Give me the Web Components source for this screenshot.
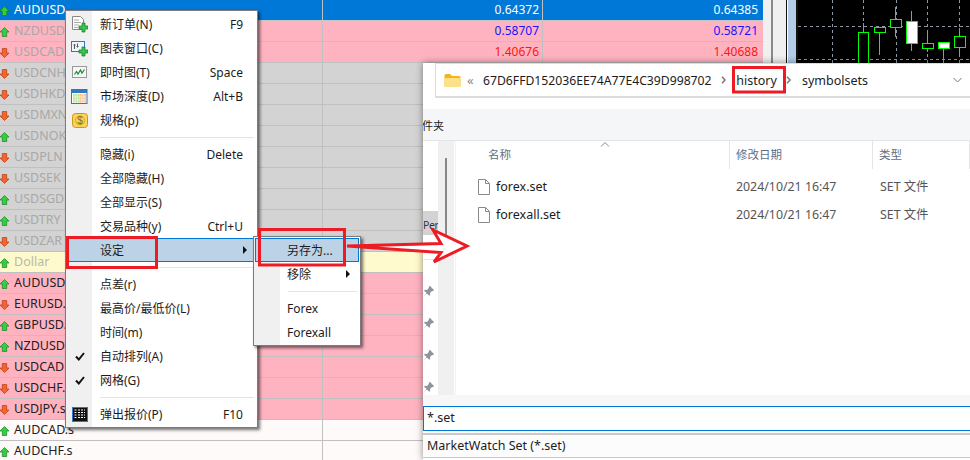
<!DOCTYPE html>
<html lang="zh">
<head>
<meta charset="utf-8">
<style>
html,body{margin:0;padding:0;width:970px;height:460px;overflow:hidden;background:#fff;font-family:"Noto Sans","Noto Sans CJK SC",sans-serif}
</style>
</head>
<body>
<desk-top>
  <market-watch slot="base"></market-watch>
  <side-strip slot="base"></side-strip>
  <candle-chart slot="base"></candle-chart>

  <file-dialog slot="over"></file-dialog>

  <pop-menu slot="over" style="left:65px;top:10px;width:193px;--icon:26px">
    <menu-item shortcut="F9"><svg slot="icon" width="17" height="17" viewBox="0 0 17 17"><path d="M1.500 .5h8l3 3v10h-11z" fill="#fff" stroke="#888"/><path d="M3 4h5M3 6.500h7M3 9h5M3 11.500h4" stroke="#aaa"/><path d="M11 7h3v3h3v3h-3v3h-3v-3H8v-3h3z" fill="#3cc153" stroke="#167a26" stroke-width=".7"/></svg>新订单(N)</menu-item>
    <menu-item><svg slot="icon" width="17" height="17" viewBox="0 0 17 17"><rect x=".5" y="1.500" width="13" height="10" fill="#eef5fc" stroke="#2f78c4"/><path d="M3.500 4v5M2.500 5h2M6.500 3.500v4M5.500 6.500h2" stroke="#555"/><path d="M11 7h3v3h3v3h-3v3h-3v-3H8v-3h3z" fill="#3cc153" stroke="#167a26" stroke-width=".7"/></svg>图表窗口(C)</menu-item>
    <menu-item shortcut="Space"><svg slot="icon" width="16" height="13" viewBox="0 0 16 13"><rect x=".5" y=".5" width="14" height="11" fill="#f6f6f6" stroke="#999"/><path d="M2.500 8.500l2-3 1.500 2.500 2.500-4 1.500 3 2.500-3.500" fill="none" stroke="#1c8a2e" stroke-width="1.200"/></svg>即时图(T)</menu-item>
    <menu-item shortcut="Alt+B"><svg slot="icon" width="17" height="15" viewBox="0 0 17 15"><rect x=".5" y=".5" width="15.500" height="14" fill="#fff" stroke="#2f78c4"/><rect x="1" y="1" width="15" height="3" fill="#2f78c4"/><path d="M2 5h6.500v8.500H2z" fill="#bfe39a"/><path d="M8.500 5H15v8.500H8.500z" fill="#f9c48c"/><path d="M4.200 5v8.500M6.400 5v8.500M10.700 5v8.500M12.900 5v8.500M2 8h13M2 11h13" stroke="#fff" stroke-width=".5"/></svg>市场深度(D)</menu-item>
    <menu-item><svg slot="icon" width="16" height="15" viewBox="0 0 16 15"><rect x=".5" y=".5" width="15" height="14" rx="3" fill="#fbd35a" stroke="#c79a1e"/><circle cx="8" cy="7.500" r="4.500" fill="none" stroke="#d9a520"/><text x="8" y="11" text-anchor="middle" font-family="Liberation Sans" font-size="10" fill="#8a6a10">$</text></svg>规格(p)</menu-item>
    <menu-sep></menu-sep>
    <menu-item shortcut="Delete">隐藏(i)</menu-item>
    <menu-item>全部隐藏(H)</menu-item>
    <menu-item>全部显示(S)</menu-item>
    <menu-item shortcut="Ctrl+U">交易品种(y)</menu-item>
    <menu-item arrow active>设定</menu-item>
    <menu-sep></menu-sep>
    <menu-item>点差(r)</menu-item>
    <menu-item>最高价/最低价(L)</menu-item>
    <menu-item>时间(m)</menu-item>
    <menu-item check>自动排列(A)</menu-item>
    <menu-item check>网格(G)</menu-item>
    <menu-sep></menu-sep>
    <menu-item shortcut="F10"><svg slot="icon" width="16" height="15" viewBox="0 0 16 15"><rect x=".5" y=".5" width="15" height="14" fill="#111" stroke="#2f78c4"/><path d="M2.500 3h2M2.500 5.500h2M2.500 8h2M2.500 10.500h2M6 3h7M6 5.500h7M6 8h7M6 10.500h7" stroke="#fff" stroke-dasharray="2 1"/></svg>弹出报价(P)</menu-item>
  </pop-menu>

  <pop-menu slot="over" style="left:253px;top:236px;width:108px;--icon:26px;--lab:7px">
    <menu-item active>另存为...</menu-item>
    <menu-item arrow>移除</menu-item>
    <menu-sep></menu-sep>
    <menu-item>Forex</menu-item>
    <menu-item>Forexall</menu-item>
  </pop-menu>

  <mark-up slot="over"></mark-up>
</desk-top>

<script>
class Base extends HTMLElement{
    connectedCallback(){
        if(this.shadowRoot) return
        this.attachShadow({mode:'open'}).innerHTML = this.html
    }
}

const ROWS = [
    ['AUDUSD',1,'sel','0.64372','0.64385'],
    ['NZDUSD',1,'pinkoff','0.58707','0.58721','#1414ff'],
    ['USDCAD',0,'pinkoff','1.40676','1.40688','#ff1414'],
    ['USDCNH',0,'off'],['USDHKD',0,'off'],['USDMXN',0,'off'],['USDNOK',1,'off'],
    ['USDPLN',0,'off'],['USDSEK',0,'off'],['USDSGD',1,'off'],['USDTRY',1,'off'],['USDZAR',0,'off'],
    ['Dollar',1,'yellow'],
    ['AUDUSD.',1,'pink'],['EURUSD.',0,'pink'],['GBPUSD.',1,'pink'],['NZDUSD',1,'pink'],
    ['USDCAD',0,'pink'],['USDCHF.',0,'pink'],['USDJPY.s',0,'pink'],
    ['AUDCAD.s',1,'snow'],['AUDCHF.s',1,'snow'],
]

class DeskTop extends Base{
    get html(){
        return `
        <style>
        :host{display:block;position:relative;width:970px;height:460px;overflow:hidden}
        #base{display:flex;height:100%}
        </style>
        <div id="base"><slot name="base"></slot></div>
        <slot name="over"></slot>
        `
    }
}

class MarketWatch extends Base{
    get html(){
        const rows = ROWS.map(r => `<quote-row symbol="${r[0]}" dir="${r[1] ? 'up' : 'down'}" kind="${r[2]}" bid="${r[3] || ''}" ask="${r[4] || ''}" price="${r[5] || ''}"></quote-row>`).join('')
        return `
        <style>:host{display:block;width:763px;flex:none}</style>
        ${rows}
        `
    }
}

class QuoteRow extends Base{
    get html(){
        const up = this.getAttribute('dir') === 'up'
        const arrow = up
            ? '<path d="M4.500.5L9 5H6.700V9.500H2.300V5H0z" fill="#2fd23c" stroke="#1d7f27" stroke-width=".7"/>'
            : '<path d="M2.300.5h4.400V5H9L4.500 9.500 0 5H2.300z" fill="#f9622a" stroke="#b23c12" stroke-width=".7"/>'
        return `
        <style>
        :host{display:grid;grid-template-columns:323px 220px 220px;height:21px;box-sizing:border-box;border-bottom:1px solid #c0c0c0;
            font:12.500px/20px "Noto Sans",sans-serif;color:#222;white-space:nowrap}
        :host([kind=sel]){background:#0078d7;color:#fff;border-bottom-color:#c6c6c6}
        :host([kind=pinkoff]){background:#ffb3c0;color:#a8a8a8}
        :host([kind=pink]){background:#ffb3c0}
        :host([kind=off]){background:#d3d3d3;color:#a8a8a8}
        :host([kind=yellow]){background:#fffacd;color:#b9b9a6}
        :host([kind=snow]){background:#fffafa}
        div{box-sizing:border-box;border-right:1px solid #c0c0c0}
        .sym{display:flex;align-items:center;gap:5px}
        .sym svg{flex:none;margin-top:2px}
        .num{text-align:right;padding-right:3px;font-size:12px;color:${this.getAttribute('price') || 'inherit'}}
        :host([kind=sel]) .num{color:#fff}
        </style>
        <div class="sym"><svg width="9" height="10" viewBox="0 0 9 10">${arrow}</svg><span>${this.getAttribute('symbol')}</span></div>
        <div class="num">${this.getAttribute('bid')}</div>
        <div class="num" style="border-right:0;padding-right:5px">${this.getAttribute('ask')}</div>
        `
    }
}

class SideStrip extends Base{
    get html(){
        return `
        <style>
        :host{display:flex;width:35px;flex:none;height:63px;background:#f0f0f0}
        i{display:block;flex:none}
        </style>
        <i style="width:8px"></i>
        <i style="width:2px;background:#8a8a8a"></i>
        <i style="width:13px"></i>
        <i style="width:1px;background:#111"></i>
        <i style="width:1px;background:#fff"></i>
        <i style="width:8px;background:#b4cce8"></i>
        <i style="width:2px;background:#111"></i>
        `
    }
}

class CandleChart extends Base{
    get html(){
        const candles = [
            [858,868,32,63,23,63,0],
            [874,885,27,32,27,55,0],
            [890,901,19,27,7,37,0],
            [906,917,21,43,11,51,1],
            [922,933,43,48,30,52,0],
            [938,949,42,48,42,63,1],
            [954,965,36,47,28,57,0],
        ]
        const lines = [832,863,896,927,959].map(x => `<path d="M${x+.5} 0V63"/>`).join('')
            + [26,59].map(y => `<path d="M798 ${y+.5}H970"/>`).join('')
        const body = candles.map(c => {
            const x = c[0] - 798, w = c[1] - c[0]
            const mid = x + Math.floor(w / 2) + .5
            return `<path d="M${mid} ${c[4]}V${c[5]}" stroke="#0f0"/>
            <rect x="${x+.5}" y="${c[2]+.5}" width="${w}" height="${c[3]-c[2]}" fill="${c[6] ? '#fff' : '#000'}" stroke="#0f0"/>`
        }).join('')
        return `
        <style>:host{display:block;flex:1;height:63px;background:#000}svg{display:block}</style>
        <svg width="172" height="63" viewBox="0 0 172 63">
            <g transform="translate(-798 0)" stroke="#8d97a5" stroke-dasharray="3 3">${lines}</g>
            ${body}
        </svg>
        `
    }
}

class PopMenu extends Base{
    get html(){
        return `
        <style>
        :host{position:absolute;display:block;box-sizing:border-box;border:1px solid #7b7b7b;padding:1px 0;
            background:linear-gradient(90deg,#f0f0f0 var(--icon),#fff var(--icon));
            box-shadow:2px 2px 3px rgba(0,0,0,.55)}
        </style>
        <slot></slot>
        `
    }
}

class MenuItem extends Base{
    get html(){
        const short = this.getAttribute('shortcut')
        return `
        <style>
        :host{display:flex;align-items:center;height:24px;box-sizing:border-box;margin:0 1px;
            font:12px/22px "Noto Sans","Noto Sans CJK SC",sans-serif;color:#1c1c1c;white-space:nowrap}
        :host([active]){background:#bcd2e6;border:1px solid #0078d7}
        .ico{flex:none;width:25px;display:flex;justify-content:center;align-items:center;margin-right:var(--lab,8px)}
        :host([active]) .ico{width:24px}
        .lab{flex:1;padding-top:2px}
        .sc{padding:2px 13px 0 0}
        .ar{width:0;height:0;border:4px solid transparent;border-left:4px solid #111;border-right:0;margin-right:9px}
        :host([active]) .ar{margin-right:8px}
        </style>
        <span class="ico"><slot name="icon">${this.hasAttribute('check') ? '<svg width="10" height="9" viewBox="0 0 10 9"><path d="M1 4.500l2.800 3L9 1" fill="none" stroke="#111" stroke-width="2"/></svg>' : ''}</slot></span>
        <span class="lab"><slot></slot></span>
        ${short ? `<span class="sc">${short}</span>` : ''}
        ${this.hasAttribute('arrow') ? '<span class="ar"></span>' : ''}
        `
    }
}

class MenuSep extends Base{
    get html(){
        return `
        <style>
        :host{display:block;height:10px;box-sizing:border-box;padding:5px 3px 4px 34px}
        div{height:1px;background:#e4e4e4}
        </style>
        <div></div>
        `
    }
}

class FileDialog extends Base{
    get html(){
        const pin = '<svg width="12" height="12" viewBox="0 0 12 12"><path d="M6.800 .8l4.400 4.400-1.300.9-.9-.2-2 2 .2 2-.9.900L3.900 8.400.8 11.200 3.600 8.100 1 5.700l.9-.9 2 .2 2-2-.2-.9z" fill="#8e959c"/></svg>'
        const chev = '<svg width="5" height="8" viewBox="0 0 5 8"><path d="M1 .8L4 4 1 7.200" fill="none" stroke="#777" stroke-width="1.500"/></svg>'
        return `
        <style>
        :host{position:absolute;left:423px;top:63px;width:547px;height:397px;display:flex;flex-direction:column;background:#fff;
            box-shadow:0 0 7px rgba(0,0,0,.45);font:12.500px "Noto Sans","Noto Sans CJK SC",sans-serif;color:#1c1c1c;white-space:nowrap}
        #addr{margin-left:12px;height:35px;flex:none;box-sizing:border-box;border:1px solid #dcdcdc;border-width:1px 0 2px 1px;display:flex;align-items:center}
        #addr .folder{margin:0 6px 0 8px}
        #addr .back{color:#888;width:16px;font-size:13px}
        #addr .chev{display:flex;justify-content:center;flex:none}
        #addr .crumb{width:231px;font-size:12.200px}
        #gap{height:11px;flex:none}
        #tool{height:32px;flex:none;box-sizing:border-box;background:#f5f6f7;border-bottom:1px solid #e5e5e5;line-height:33px;overflow:hidden}
        #tool span{font-size:11px;display:block;margin-left:-1px}
        #body{display:flex;flex:1;min-height:0}
        #nav{width:15px;flex:none}
        #per{margin-top:70px;height:24px;background:#d3d3d3;font-size:10.500px;letter-spacing:-.4px;line-height:29px;color:#333}
        #rule{margin-top:24px;height:1px;background:#e6e6e6}
        #pins{margin-top:25px;display:flex;flex-direction:column;gap:20px}
        #pins svg{display:block}
        #bar{width:16px;flex:none;background:#f0f0f0;padding:17px 0 0 7px;box-sizing:border-box}
        #bar i{display:block;width:2px;height:93px;background:#888}
        #edge{width:3px;flex:none;background:linear-gradient(90deg,#fff 1px,#f2f2f2 1px,#f2f2f2 2px,#fff 2px)}
        #list{flex:1;min-width:0}
        #head{display:grid;grid-template-columns:273px 143px 1fr;height:28px;color:#5d6f85;font-size:11.500px;line-height:28px;position:relative}
        #head span{border-right:1px solid #e5e5e5;padding-left:6px}
        #head span:first-child{padding-left:31px}
        #head span:last-child{border:0;padding-left:7px}
        #head svg{position:absolute;left:143px;top:1px}
        #files{padding-top:4px}
        #strip{height:11px;flex:none;background:#f7f7f7}
        #name{height:25px;flex:none;box-sizing:border-box;border:1.500px solid #0078d7;border-right:0;line-height:22px;padding-left:3px}
        #type{margin-top:2px;height:25px;flex:none;box-sizing:border-box;border:solid #c8c8c8;border-width:2px 0 1px;background:#fcfcfc;line-height:22px;padding-left:4px}
        #foot{height:2px;flex:none}
        </style>
        <div id="addr">
            <svg class="folder" width="17" height="15" viewBox="0 0 17 15"><path d="M.5 2.500q0-1.500 1.500-1.500h4l2 2h7q1.500 0 1.500 1.500v8q0 1.500-1.500 1.500H2q-1.500 0-1.500-1.500z" fill="#f3b416"/><path d="M.5 5h16v7.500q0 1.500-1.500 1.500H2q-1.500 0-1.500-1.500z" fill="#fde08a"/></svg>
            <span class="back">«</span>
            <span class="crumb">67D6FFD152036EE74A77E4C39D998702</span>
            <span class="chev" style="width:19px">${chev}</span>
            <span style="width:47px;text-align:center">history</span>
            <span class="chev" style="width:16px;margin-right:6px">${chev}</span>
            <span>symbolsets</span>
            <svg style="margin-left:auto;margin-right:8px" width="9" height="6" viewBox="0 0 9 6"><path d="M.5 1l4 4 4-4" fill="none" stroke="#777"/></svg>
        </div>
        <div id="gap"></div>
        <div id="tool"><span>件夹</span></div>
        <div id="body">
            <div id="nav">
                <div id="per">Per</div>
                <div id="rule"></div>
                <div id="pins">${pin}${pin}${pin}${pin}</div>
            </div>
            <div id="bar"><i></i></div>
            <div id="edge"></div>
            <div id="list">
                <div id="head">
                    <span>名称</span><span>修改日期</span><span>类型</span>
                    <svg width="10" height="5" viewBox="0 0 10 5"><path d="M1 4.500l4-4 4 4" fill="none" stroke="#888"/></svg>
                </div>
                <div id="files">
                    <file-row name="forex.set"></file-row>
                    <file-row name="forexall.set"></file-row>
                </div>
            </div>
        </div>
        <div id="strip"></div>
        <div id="name">*.set</div>
        <div id="type">MarketWatch Set (*.set)</div>
        <div id="foot"></div>
        `
    }
}

class FileRow extends Base{
    get html(){
        return `
        <style>
        :host{display:grid;grid-template-columns:273px 143px 1fr;height:28px;line-height:28px;font-size:12.500px;color:#1c1c1c}
        div{display:flex;align-items:center;padding-left:21px;gap:6px}
        span{padding-left:6px;color:#555;font-size:12.350px}
        span:last-child{padding-left:7px}
        </style>
        <div><svg width="12" height="16" viewBox="0 0 12 16"><path d="M.5.5h7l4 4v11H.5z" fill="#fff" stroke="#8a8a8a"/><path d="M7.500.5v4h4" fill="none" stroke="#8a8a8a"/></svg>${this.getAttribute('name')}</div>
        <span>2024/10/21 16:47</span>
        <span>SET 文件</span>
        `
    }
}

class MarkUp extends Base{
    get html(){
        return `
        <style>
        :host{position:absolute;left:0;top:0;pointer-events:none}
        svg{display:block}
        </style>
        <svg width="970" height="460" viewBox="0 0 970 460" fill="none" stroke="#ed1c24" stroke-width="3">
            <rect x="67.500" y="237.500" width="89" height="30"/>
            <rect x="259.500" y="229.500" width="85" height="35.500"/>
            <rect x="733.500" y="67.500" width="51" height="24.500"/>
            <path d="M347 246L441 243.500L433 230L467 246L434 262L441 252.500z" fill="#fff"/>
        </svg>
        `
    }
}

customElements.define('desk-top', DeskTop)
customElements.define('market-watch', MarketWatch)
customElements.define('quote-row', QuoteRow)
customElements.define('side-strip', SideStrip)
customElements.define('candle-chart', CandleChart)
customElements.define('pop-menu', PopMenu)
customElements.define('menu-item', MenuItem)
customElements.define('menu-sep', MenuSep)
customElements.define('file-dialog', FileDialog)
customElements.define('file-row', FileRow)
customElements.define('mark-up', MarkUp)
</script>
</body>
</html>
